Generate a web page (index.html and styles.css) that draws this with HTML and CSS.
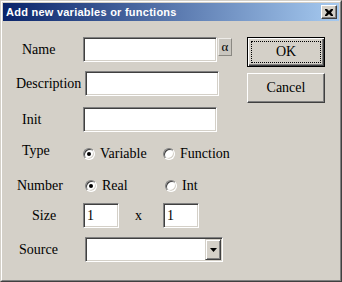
FILE: index.html
```html
<!DOCTYPE html>
<html>
<head>
<meta charset="utf-8">
<link rel="stylesheet" href="styles.css">
</head>
<body>
<div class="window">
  <div class="frame">
    <div class="titlebar">
      <span class="title">Add new variables or functions</span>
      <span class="close">
        <svg width="8" height="7" viewBox="0 0 8 7"><path d="M0 0h2l2 2 2-2h2v1L6 3.5 8 6v1H6L4 5 2 7H0V6l2-2.5L0 1z" fill="#000"/></svg>
      </span>
    </div>
    <div class="content">
      <div class="form">
        <div class="row">
          <span class="label l-name">Name</span>
          <input class="field" type="text">
          <span class="alpha">α</span>
        </div>
        <div class="row r2">
          <span class="label l-desc">Description</span>
          <input class="field shift" type="text">
        </div>
        <div class="row r3">
          <span class="label l-init">Init</span>
          <input class="field" type="text">
        </div>
        <div class="row short r4">
          <span class="label l-type">Type</span>
          <span class="opt"><span class="radio on"></span>Variable</span>
          <span class="opt"><span class="radio"></span>Function</span>
        </div>
        <div class="row short r5">
          <span class="label l-num">Number</span>
          <span class="opts">
            <span class="opt"><span class="radio on"></span>Real</span>
            <span class="opt"><span class="radio"></span>Int</span>
          </span>
        </div>
        <div class="row r6">
          <span class="label l-size">Size</span>
          <input class="field small" type="text" value="1">
          <span class="times">x</span>
          <input class="field small" type="text" value="1">
        </div>
        <div class="row r7">
          <span class="label l-src">Source</span>
          <span class="combo">
            <span class="combo-text"></span>
            <span class="drop">
              <svg width="7" height="4" viewBox="0 0 7 4"><path d="M0 0h7L3.5 4z" fill="#000"/></svg>
            </span>
          </span>
        </div>
      </div>
      <div class="buttons">
        <button class="btn default"><span class="focus">OK</span></button>
        <button class="btn">Cancel</button>
      </div>
    </div>
  </div>
</div>
</body>
</html>
```
FILE: styles.css
```css
* { box-sizing: border-box; }
html, body { margin: 0; padding: 0; }
body {
  width: 342px;
  height: 282px;
  overflow: hidden;
  background: #d4d0c8;
  color: #000;
  font-family: "Liberation Serif", "Times New Roman", serif;
  font-size: 14px;
  line-height: 16px;
}
.window {
  width: 342px;
  height: 282px;
  background: #d4d0c8;
  border: 1px solid;
  border-color: #d4d0c8 #404040 #404040 #d4d0c8;
}
.frame {
  height: 100%;
  border: 1px solid;
  border-color: #fff #808080 #808080 #fff;
  padding: 1px;
  display: flex;
  flex-direction: column;
}
.titlebar {
  height: 18px;
  flex: none;
  background: linear-gradient(to right, #0a246a, #a6caf0);
  display: flex;
  align-items: center;
  justify-content: space-between;
  padding: 0 2px 0 3px;
}
.title {
  color: #fff;
  font-family: "Liberation Sans", Arial, sans-serif;
  font-weight: bold;
  font-size: 11px;
  letter-spacing: 0.25px;
  line-height: 18px;
}
.close {
  width: 16px;
  height: 14px;
  background: #d4d0c8;
  border: 1px solid;
  border-color: #fff #404040 #404040 #fff;
  box-shadow: inset -1px -1px #808080;
  display: flex;
  align-items: center;
  justify-content: center;
}
.close svg { display: block; }
.content {
  flex: 1;
  display: flex;
}
.form {
  width: 244px;
  padding-top: 16px;
  display: flex;
  flex-direction: column;
}
.row {
  display: flex;
  align-items: center;
  height: 25px;
  flex: none;
}
.row.short { height: 16px; }
.r2 { margin-top: 9px; }
.r3 { margin-top: 11px; }
.r4 { margin-top: 14px; }
.r5 { margin-top: 16px; }
.r6 { margin-top: 9px; }
.r7 { margin-top: 9px; }
.label {
  width: 80px;
  flex: none;
  white-space: nowrap;
}
.l-name { padding-left: 19px; }
.l-desc { padding-left: 13px; }
.l-init { padding-left: 19px; }
.l-type { padding-left: 19px; margin-bottom: 6px; }
.l-num { padding-left: 14px; }
.l-size { padding-left: 29px; }
.l-src { padding-left: 16px; }
.field {
  -webkit-appearance: none;
  appearance: none;
  width: 134px;
  height: 25px;
  margin: 0;
  padding: 0 3px;
  background: #fff;
  border: 1px solid;
  border-color: #808080 #fff #fff #808080;
  box-shadow: inset 1px 1px #404040, inset -1px -1px #d4d0c8;
  font-family: "Liberation Serif", "Times New Roman", serif;
  font-size: 14px;
  color: #000;
  outline: none;
}
.field.shift { margin-left: 2px; }
.field.small { width: 36px; }
.alpha {
  align-self: flex-start;
  margin: 1px 0 0 1px;
  width: 14px;
  height: 18px;
  background: #c9c6bf;
  border: 1px solid;
  border-color: #eeece8 #8a8882 #8a8882 #eeece8;
  display: flex;
  align-items: center;
  justify-content: center;
  font-size: 13px;
  line-height: 14px;
}
.opts { display: flex; margin-left: 2px; }
.opt {
  width: 80px;
  flex: none;
  display: flex;
  align-items: center;
  gap: 5px;
  white-space: nowrap;
}
.radio {
  width: 12px;
  height: 12px;
  flex: none;
  border-radius: 50%;
  background: #fff;
  border: 1px solid;
  border-color: #808080 #fff #fff #808080;
  box-shadow: inset 1px 1px #404040, inset -1px -1px #d4d0c8;
  display: flex;
  align-items: center;
  justify-content: center;
}
.radio.on::after {
  content: "";
  width: 4px;
  height: 4px;
  border-radius: 50%;
  background: #000;
}
.times {
  margin: 0 21px 0 16px;
  width: 7px;
}
.combo {
  margin-left: 2px;
  width: 138px;
  height: 25px;
  padding: 1px;
  background: #fff;
  border: 1px solid;
  border-color: #808080 #fff #fff #808080;
  box-shadow: inset 1px 1px #404040, inset -1px -1px #d4d0c8;
  display: flex;
}
.combo-text { flex: 1; }
.drop {
  width: 16px;
  background: #d4d0c8;
  border: 1px solid;
  border-color: #d4d0c8 #404040 #404040 #d4d0c8;
  box-shadow: inset 1px 1px #fff, inset -1px -1px #808080;
  display: flex;
  align-items: center;
  justify-content: center;
}
.drop svg { display: block; }
.buttons {
  padding-top: 16px;
  display: flex;
  flex-direction: column;
  gap: 6px;
}
.btn {
  -webkit-appearance: none;
  appearance: none;
  width: 78px;
  height: 30px;
  margin: 0;
  padding: 0;
  background: #d4d0c8;
  color: #000;
  font-family: "Liberation Serif", "Times New Roman", serif;
  font-size: 14px;
  line-height: 16px;
  border: 1px solid;
  border-color: #fff #404040 #404040 #fff;
  box-shadow: inset -1px -1px #808080;
  display: flex;
  align-items: center;
  justify-content: center;
}
.btn.default {
  border: 1px solid #000;
  box-shadow: inset 1px 1px #fff, inset -1px -1px #404040, inset -2px -2px #808080;
  padding: 3px;
  align-items: stretch;
}
.focus {
  flex: 1;
  border: 1px dotted #000;
  display: flex;
  align-items: center;
  justify-content: center;
}
```
